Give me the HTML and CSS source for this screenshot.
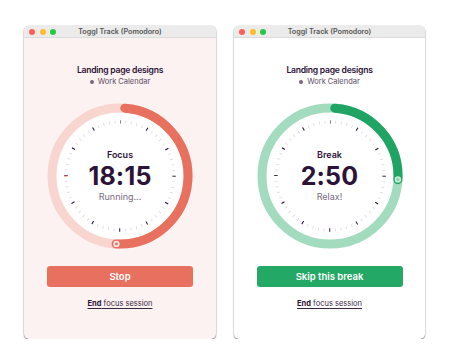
FILE: index.html
```html
<!DOCTYPE html>
<html>
<head>
<meta charset="utf-8">
<link rel="stylesheet" href="styles.css">
</head>
<body>
<div class="stage">
  <div class="window focus">
    <div class="titlebar">
      <div class="lights"><span class="l red"></span><span class="l yellow"></span><span class="l green"></span></div>
      <div class="title">Toggl Track (Pomodoro)</div>
    </div>
    <div class="body">
      <div class="project">Landing page designs</div>
      <div class="client"><span class="dot"></span>Work Calendar</div>
      <div class="timer">
        <svg class="dial" viewBox="0 0 146 146" width="146" height="146">
          <circle cx="73" cy="73" r="63.5" class="face"/>
          <circle cx="73" cy="73" r="68" class="track"/>
          <circle cx="73" cy="73" r="68" class="progress" stroke-dasharray="212.44 500" transform="rotate(-86 73 73)"/>
          <circle cx="73" cy="73" r="54" class="minor" transform="rotate(-90 73 73)"/>
          <circle cx="73" cy="73" r="54" class="major" transform="rotate(-90 73 73)"/>
          <line x1="17" y1="73" x2="20.5" y2="73" class="mark"/>
          <circle cx="69.44" cy="140.91" r="3.2" class="knob"/>
          <circle cx="69.44" cy="140.91" r="1.3" class="knob-dot"/>
        </svg>
        <div class="readout">
          <div class="phase">Focus</div>
          <div class="time">18:15</div>
          <div class="status">Running...</div>
        </div>
      </div>
      <button class="action">Stop</button>
      <a class="end"><b>End</b> focus session</a>
    </div>
  </div>
  <div class="window break">
    <div class="titlebar">
      <div class="lights"><span class="l red"></span><span class="l yellow"></span><span class="l green"></span></div>
      <div class="title">Toggl Track (Pomodoro)</div>
    </div>
    <div class="body">
      <div class="project">Landing page designs</div>
      <div class="client"><span class="dot"></span>Work Calendar</div>
      <div class="timer">
        <svg class="dial" viewBox="0 0 146 146" width="146" height="146">
          <circle cx="73" cy="73" r="63.5" class="face"/>
          <circle cx="73" cy="73" r="68" class="track"/>
          <circle cx="73" cy="73" r="68" class="progress" stroke-dasharray="105.63 500" transform="rotate(-86 73 73)"/>
          <circle cx="73" cy="73" r="54" class="minor" transform="rotate(-90 73 73)"/>
          <circle cx="73" cy="73" r="54" class="major" transform="rotate(-90 73 73)"/>
          <circle cx="140.91" cy="76.56" r="3.2" class="knob"/>
          <circle cx="140.91" cy="76.56" r="1.3" class="knob-dot"/>
        </svg>
        <div class="readout">
          <div class="phase">Break</div>
          <div class="time">2:50</div>
          <div class="status">Relax!</div>
        </div>
      </div>
      <button class="action">Skip this break</button>
      <a class="end"><b>End</b> focus session</a>
    </div>
  </div>
</div>
</body>
</html>
```
FILE: styles.css
```css
* { box-sizing: border-box; }
html, body { margin: 0; background: #fff; }
body { font-family: Inter, "Noto Sans", sans-serif; color: #2c1338; }
.stage {
  display: flex;
  gap: 18px;
  padding: 26px 0 0 24px;
}
.window {
  width: 192px;
  height: 313px;
  border-radius: 5px;
  overflow: hidden;
  box-shadow: 0 1px 1.5px rgba(0,0,0,0.45), 0 0 0 0.5px rgba(0,0,0,0.12);
  display: flex;
  flex-direction: column;
}
.window.break { width: 191px; background: #ffffff; }
.window.focus { background: #fcf2f1; }
.titlebar {
  height: 12px;
  background: #ebebeb;
  border-bottom: 1px solid #dcdcdc;
  display: grid;
  grid-template-columns: 1fr;
  align-items: center;
}
.lights, .title { grid-area: 1 / 1; }
.lights { display: flex; gap: 4.5px; padding-left: 5px; }
.l { width: 6px; height: 6px; border-radius: 50%; }
.red { background: #fe5f57; }
.yellow { background: #febc2e; }
.green { background: #28c840; }
.title {
  text-align: center;
  font-size: 7.2px;
  font-weight: 600;
  color: #555555;
  line-height: 12px;
}
.body {
  display: flex;
  flex-direction: column;
  align-items: center;
}
.project {
  margin-top: 26px;
  font-size: 8.6px;
  font-weight: 600;
  line-height: 12px;
  letter-spacing: -0.25px;
}
.client {
  margin-top: 1px;
  font-size: 7.5px;
  line-height: 10px;
  color: #5d4b63;
  display: flex;
  align-items: center;
  gap: 4px;
}
.dot { width: 4px; height: 4px; border-radius: 50%; background: #7a6680; }
.timer {
  margin-top: 16px;
  display: grid;
  place-items: center;
}
.dial, .readout { grid-area: 1 / 1; }
.dial { display: block; }
.face { fill: #ffffff; }
.track { fill: none; stroke-width: 9; }
.progress { fill: none; stroke-width: 9; stroke-linecap: round; }
.minor { fill: none; stroke: #ddd6dc; stroke-width: 3; stroke-dasharray: 0.8 4.8549; stroke-dashoffset: 0.4; }
.major { fill: none; stroke: #2c1338; stroke-width: 3.5; stroke-dasharray: 1 27.2743; stroke-dashoffset: 0.5; }
.mark { stroke: #e8705f; stroke-width: 1.2; }
.focus .track { stroke: #f8d6cf; }
.focus .progress { stroke: #e8705f; }
.focus .knob { fill: #fbe3de; }
.focus .knob-dot { fill: #c9766b; }
.break .track { stroke: #a3dbbf; }
.break .progress { stroke: #1fa463; }
.break .knob { fill: #c4e9d6; }
.break .knob-dot { fill: #7cc4a0; }
.readout {
  display: flex;
  flex-direction: column;
  align-items: center;
}
.phase { font-size: 9px; font-weight: 600; line-height: 12px; }
.time { font-size: 25px; font-weight: 700; line-height: 30px; letter-spacing: 0.2px; }
.status { font-size: 9px; line-height: 12px; color: #7a6a80; }
.action {
  margin-top: 17px;
  width: 146px;
  height: 21px;
  border: none;
  border-radius: 3px;
  color: #fff;
  font-family: inherit;
  font-size: 9.5px;
  font-weight: 600;
  padding: 0;
}
.focus .action { background: #e8705f; }
.break .action { background: #24a865; }
.end {
  margin-top: 12px;
  font-size: 7.5px;
  line-height: 10px;
  color: #3a2540;
  text-decoration: underline;
  text-underline-offset: 1.5px;
}
.end b { font-weight: 700; color: #2c1338; }
```
